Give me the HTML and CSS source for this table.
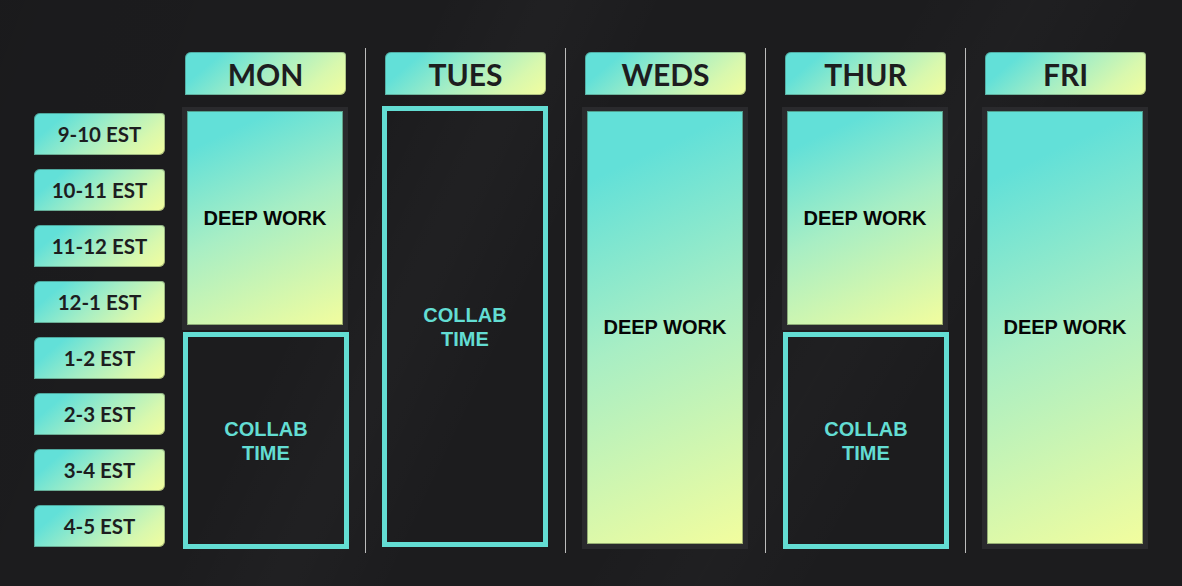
FILE: index.html
```html
<!DOCTYPE html>
<html lang="en">
<head>
<meta charset="utf-8">
<title>Weekly Schedule</title>
<link rel="stylesheet" href="styles.css">
</head>
<body>
<div class="page">
  <div class="times">
    <div class="time">9-10 EST</div>
    <div class="time">10-11 EST</div>
    <div class="time">11-12 EST</div>
    <div class="time">12-1 EST</div>
    <div class="time">1-2 EST</div>
    <div class="time">2-3 EST</div>
    <div class="time">3-4 EST</div>
    <div class="time">4-5 EST</div>
  </div>
  <div class="days">
    <div class="day">
      <div class="day-head">MON</div>
      <div class="blocks">
        <div class="frame half"><div class="deep">DEEP WORK</div></div>
        <div class="collab half-c">COLLAB<br>TIME</div>
      </div>
    </div>
    <div class="sep"></div>
    <div class="day">
      <div class="day-head">TUES</div>
      <div class="blocks">
        <div class="collab full-c">COLLAB<br>TIME</div>
      </div>
    </div>
    <div class="sep"></div>
    <div class="day">
      <div class="day-head">WEDS</div>
      <div class="blocks">
        <div class="frame full"><div class="deep">DEEP WORK</div></div>
      </div>
    </div>
    <div class="sep"></div>
    <div class="day">
      <div class="day-head">THUR</div>
      <div class="blocks">
        <div class="frame half"><div class="deep">DEEP WORK</div></div>
        <div class="collab half-c">COLLAB<br>TIME</div>
      </div>
    </div>
    <div class="sep"></div>
    <div class="day">
      <div class="day-head">FRI</div>
      <div class="blocks">
        <div class="frame full"><div class="deep">DEEP WORK</div></div>
      </div>
    </div>
  </div>
</div>
</body>
</html>
```

FILE: styles.css
```css
html, body {
  margin: 0;
  padding: 0;
}

body {
  width: 1182px;
  height: 586px;
  overflow: hidden;
  background-color: #1c1c1e;
  background-image:
    linear-gradient(115deg, transparent 30%, rgba(255,255,255,0.018) 38%, transparent 46%),
    linear-gradient(120deg, transparent 60%, rgba(255,255,255,0.015) 68%, transparent 76%),
    linear-gradient(110deg, rgba(0,0,0,0.06) 0%, transparent 20%);
  font-family: "Liberation Sans", Arial, sans-serif;
}

.page {
  display: flex;
  align-items: flex-start;
  padding: 48px 0 0 34px;
}

.times {
  width: 131px;
  margin-top: 65px;
  display: flex;
  flex-direction: column;
  gap: 14px;
}

.time {
  height: 42px;
  display: flex;
  align-items: center;
  justify-content: center;
  font-family: Lato, "Noto Sans", sans-serif;
  font-weight: 700;
  font-size: 20.5px;
  color: #1d1d1f;
  border-radius: 6px 4px 6px 0;
  background: linear-gradient(140deg, #62e0d8 18%, #a6eec4 50%, #d8f8ae 78%, #f2fd9e 100%);
  box-shadow: inset 0 0 0 1px rgba(40, 60, 50, 0.35);
}

.days {
  display: flex;
  margin-left: 17px;
}

.day {
  width: 166px;
  display: flex;
  flex-direction: column;
  padding-bottom: 4px;
}

.sep {
  width: 1px;
  background: #bcbcbc;
  margin: 0 16px 0 17px;
}

.day-head {
  height: 43px;
  margin: 4px 2px 0 3px;
  display: flex;
  align-items: center;
  justify-content: center;
  font-family: Lato, "Noto Sans", sans-serif;
  font-weight: 700;
  font-size: 30px;
  color: #1d1d1f;
  border-radius: 6px 4px 6px 0;
  background: linear-gradient(140deg, #62e0d8 18%, #a6eec4 50%, #d8f8ae 78%, #f2fd9e 100%);
  box-shadow: inset 0 0 0 1px rgba(40, 60, 50, 0.3);
}

.blocks {
  margin-top: 12px;
  height: 442px;
  display: flex;
  flex-direction: column;
  gap: 2px;
}

.frame {
  background: #2a2a2d;
  padding: 4px 5px 5px;
  display: flex;
  box-sizing: border-box;
}

.frame.half {
  height: 223px;
}

.frame.full {
  height: 442px;
}

.deep {
  flex: 1;
  display: flex;
  align-items: center;
  justify-content: center;
  font-weight: 700;
  font-size: 20px;
  color: #050505;
  background: linear-gradient(155deg, #62e0d8 14%, #a8eec4 50%, #f2fd9e 100%);
  box-shadow: inset 0 0 0 1px rgba(60, 80, 50, 0.45);
}

.collab {
  box-sizing: border-box;
  border: 5px solid #63ddd3;
  display: flex;
  align-items: center;
  justify-content: center;
  text-align: center;
  font-weight: 700;
  font-size: 20px;
  line-height: 24px;
  color: #63ddd3;
}

.collab.half-c {
  height: 217px;
  margin-left: 1px;
  margin-right: -1px;
}

.collab.full-c {
  height: 441px;
  margin-top: -1px;
}
```
